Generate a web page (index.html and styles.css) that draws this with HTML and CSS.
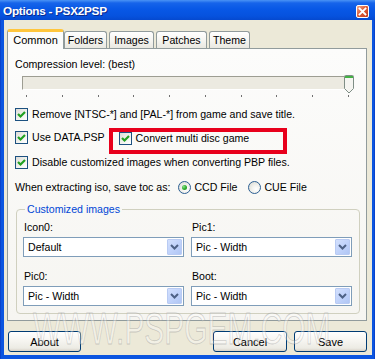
FILE: index.html
```html
<!DOCTYPE html>
<html>
<head>
<meta charset="utf-8">
<title>Options - PSX2PSP</title>
<link rel="stylesheet" href="styles.css">
</head>
<body>
<div class="window">
  <div class="titlebar">
    <span class="title">Options - PSX2PSP</span>
    <span class="close"><svg width="9" height="9" viewBox="0 0 9 9"><path d="M1.5 1.5 L7.5 7.5 M7.5 1.5 L1.5 7.5" stroke="#fff" stroke-width="1.8" stroke-linecap="square"/></svg></span>
  </div>
  <div class="client">
    <div class="tabs">
      <div class="tab active tab-common">Common</div>
      <div class="tab tab-folders">Folders</div>
      <div class="tab tab-images">Images</div>
      <div class="tab tab-patches">Patches</div>
      <div class="tab tab-theme">Theme</div>
    </div>
    <div class="panel">
      <div class="caption">Compression level: (best)</div>
      <div class="slider">
        <div class="track"></div>
        <svg class="thumb" width="10" height="19" viewBox="0 0 10 19"><path d="M0.5 1.5 Q0.5 0.5 1.5 0.5 H8.5 Q9.5 0.5 9.5 1.5 V13.5 L5 18 L0.5 13.5 Z" fill="#F5F5F1" stroke="#7F8E86"/><rect x="1" y="1" width="8" height="2" fill="#45B045"/></svg>
        <div class="ticks"><i></i><i></i><i></i><i></i><i></i><i></i><i></i><i></i><i></i><i></i></div>
      </div>
      <div class="check-row row1"><span class="cb"><svg width="11" height="11" viewBox="0 0 11 11"><polyline points="2,5 4.5,7.5 9,3" fill="none" stroke="#21A121" stroke-width="2.2"/></svg></span><span>Remove [NTSC-*] and [PAL-*] from game and save title.</span></div>
      <div class="pair-row">
        <div class="check-row first"><span class="cb"><svg width="11" height="11" viewBox="0 0 11 11"><polyline points="2,5 4.5,7.5 9,3" fill="none" stroke="#21A121" stroke-width="2.2"/></svg></span><span>Use DATA.PSP</span></div>
        <div class="highlight"><div class="check-row"><span class="cb"><svg width="11" height="11" viewBox="0 0 11 11"><polyline points="2,5 4.5,7.5 9,3" fill="none" stroke="#21A121" stroke-width="2.2"/></svg></span><span>Convert multi disc game</span></div></div>
      </div>
      <div class="check-row row3"><span class="cb"><svg width="11" height="11" viewBox="0 0 11 11"><polyline points="2,5 4.5,7.5 9,3" fill="none" stroke="#21A121" stroke-width="2.2"/></svg></span><span>Disable customized images when converting PBP files.</span></div>
      <div class="radio-row">
        <span>When extracting iso, save toc as:</span>
        <span class="radio-item ccd"><span class="rb on"></span><span>CCD File</span></span>
        <span class="radio-item cue"><span class="rb"></span><span>CUE File</span></span>
      </div>
      <fieldset class="group">
        <legend>Customized images</legend>
        <div class="combos">
          <div class="field"><div class="flabel">Icon0:</div><div class="combo"><span>Default</span><span class="arrow"><svg width="15" height="16" viewBox="0 0 15 16"><polyline points="4,6 7.5,9.5 11,6" fill="none" stroke="#4D6185" stroke-width="2"/></svg></span></div></div>
          <div class="field"><div class="flabel">Pic1:</div><div class="combo"><span>Pic - Width</span><span class="arrow"><svg width="15" height="16" viewBox="0 0 15 16"><polyline points="4,6 7.5,9.5 11,6" fill="none" stroke="#4D6185" stroke-width="2"/></svg></span></div></div>
          <div class="field lower"><div class="flabel">Pic0:</div><div class="combo"><span>Pic - Width</span><span class="arrow"><svg width="15" height="16" viewBox="0 0 15 16"><polyline points="4,6 7.5,9.5 11,6" fill="none" stroke="#4D6185" stroke-width="2"/></svg></span></div></div>
          <div class="field lower"><div class="flabel">Boot:</div><div class="combo"><span>Pic - Width</span><span class="arrow"><svg width="15" height="16" viewBox="0 0 15 16"><polyline points="4,6 7.5,9.5 11,6" fill="none" stroke="#4D6185" stroke-width="2"/></svg></span></div></div>
        </div>
      </fieldset>
    </div>
    <div class="buttons">
      <button class="btn about">About</button>
      <button class="btn cancel">Cancel</button>
      <button class="btn save">Save</button>
    </div>
  </div>
  <div class="watermark" aria-hidden="true">WWW.PSPGEM.COM</div>
</div>
</body>
</html>
```

FILE: styles.css
```css
html, body {
  margin: 0;
  padding: 0;
}
body {
  width: 375px;
  height: 359px;
  overflow: hidden;
  font-family: "Liberation Sans", Arial, sans-serif;
  font-size: 10.6px;
  color: #000;
}
.window {
  position: relative;
  width: 375px;
  height: 359px;
  box-sizing: border-box;
  background: linear-gradient(to right, #0831B8 0, #0B55E0 1px, #0B55E0 374px, #0831B8 375px);
  display: flex;
  flex-direction: column;
}
.titlebar {
  height: 20px;
  flex: none;
  box-sizing: border-box;
  display: flex;
  align-items: center;
  justify-content: space-between;
  padding: 2px 6px 0 3px;
  background: linear-gradient(to bottom, #4A93F5 0, #1664EA 3px, #0858E6 9px, #0652DE 16px, #0549CF 20px);
}
.title {
  color: #fff;
  font-weight: bold;
  font-size: 11.8px;
  letter-spacing: -0.3px;
  text-shadow: 1px 1px 0 #0A2B8E;
}
.close {
  width: 13px;
  height: 13px;
  box-sizing: border-box;
  border: 1px solid #fff;
  border-radius: 2px;
  background: linear-gradient(135deg, #F3A88A 0, #E0603A 45%, #C4391A 100%);
  display: flex;
  align-items: center;
  justify-content: center;
}
.client {
  flex: 1;
  margin: 0 3px 4px 4px;
  background: #ECE9D8;
  padding: 9px 5px 0 3px;
  display: flex;
  flex-direction: column;
}
.tabs {
  display: flex;
  align-items: flex-end;
  height: 19px;
  position: relative;
  z-index: 1;
}
.tab {
  box-sizing: border-box;
  height: 17px;
  margin-right: 1px;
  border: 1px solid #919B9C;
  border-bottom: none;
  border-radius: 3px 3px 0 0;
  background: linear-gradient(to bottom, #FFFFFF 0, #F6F5F1 50%, #E9E8E1 100%);
  text-align: center;
  line-height: 16px;
}
.tab.active {
  height: 20px;
  margin-bottom: -1px;
  margin-right: 0;
  border-top: 3px solid #FFC63D;
  background: #FCFCFB;
  font-size: 11px;
}
.tab-common { width: 57px; }
.tab-folders { width: 43px; }
.tab-images { width: 45px; margin-left: 1px; }
.tab-patches { width: 51px; margin-left: 1px; }
.tab-theme { width: 41px; margin-left: 1px; }
.panel {
  border: 1px solid #919B9C;
  background: linear-gradient(to bottom, #FCFCFB 0, #F6F5F1 100%);
  padding: 9px 6px 6px 7px;
}
.caption {
  line-height: 13px;
}
.slider {
  position: relative;
  margin: 4px 0 0 7px;
  width: 331px;
  padding-top: 1px;
}
.track {
  box-sizing: border-box;
  width: 328px;
  height: 14px;
  border: 1px solid;
  border-color: #9D9D92 #FFFFFF #FFFFFF #9D9D92;
  background: #ECEAE1;
}
.thumb {
  position: absolute;
  left: 322px;
  top: 0;
}
.ticks {
  display: flex;
  justify-content: space-between;
  margin: 5px 0 0 4px;
  width: 323px;
  height: 2px;
}
.ticks i {
  display: block;
  width: 1px;
  height: 2px;
  background: #707070;
}
.check-row {
  display: flex;
  align-items: center;
  gap: 4px;
  height: 13px;
  line-height: 13px;
  white-space: nowrap;
}
.cb {
  width: 13px;
  height: 13px;
  flex: none;
  box-sizing: border-box;
  border: 1px solid #1C5180;
  background: linear-gradient(135deg, #DCDCD7 0, #F4F4F1 60%, #FFFFFF 100%);
  display: flex;
}
.row1 {
  margin-top: 11px;
}
.pair-row {
  display: flex;
  align-items: flex-start;
  gap: 4px;
  margin-top: 7px;
}
.pair-row .first {
  margin-top: 3px;
}
.highlight {
  box-sizing: border-box;
  width: 178px;
  height: 26px;
  border: 4px solid #E8001C;
  padding: 0 0 5px 6px;
  display: flex;
  align-items: center;
}
.row3 {
  margin-top: 2px;
}
.radio-row {
  display: flex;
  align-items: center;
  height: 13px;
  line-height: 13px;
  margin-top: 12px;
  white-space: nowrap;
}
.radio-item {
  display: flex;
  align-items: center;
  gap: 3px;
}
.ccd { margin-left: 8px; }
.cue { margin-left: 11px; }
.rb {
  width: 13px;
  height: 13px;
  box-sizing: border-box;
  border: 1px solid #2C5F93;
  border-radius: 50%;
  background: radial-gradient(circle at 65% 65%, #FFFFFF 0, #F2F2EE 40%, #D6D6CF 100%);
  display: flex;
  align-items: center;
  justify-content: center;
}
.rb.on::after {
  content: "";
  width: 5px;
  height: 5px;
  border-radius: 50%;
  background: radial-gradient(circle at 35% 35%, #8AE08A 0, #2EAE2E 50%, #1C8E1C 100%);
}
.group {
  margin: 9px 0 0 1px;
  padding: 5px 7px 7px 6px;
  border: 1px solid #D0D0BF;
  border-radius: 4px;
  min-width: 0;
}
.group legend {
  padding: 0 2px;
  margin-left: 2px;
  line-height: 13px;
  color: #0046D5;
}
.combos {
  display: grid;
  grid-template-columns: 161px 161px;
  column-gap: 7px;
}
.field.lower {
  margin-top: 13px;
}
.flabel {
  line-height: 13px;
  margin: 0 0 3px 1px;
}
.combo {
  box-sizing: border-box;
  height: 20px;
  border: 1px solid #7F9DB9;
  background: #FFFFFF;
  display: flex;
  align-items: center;
  padding-left: 4px;
}
.combo .arrow {
  margin: 1px 1px 1px auto;
  width: 15px;
  height: 16px;
  box-sizing: border-box;
  border: 1px solid #B9CBF3;
  border-radius: 1px;
  background: linear-gradient(135deg, #D3E0FD 0, #C1D3FB 50%, #B0C6F4 100%);
  display: flex;
}
.combo .arrow svg {
  margin: -1px;
}
.buttons {
  display: flex;
  margin-top: 10px;
  padding-left: 1px;
  gap: 7px;
}
.btn {
  box-sizing: border-box;
  height: 21px;
  width: 73px;
  padding: 0;
  border: 1px solid #003C74;
  border-radius: 3px;
  background: linear-gradient(to bottom, #FFFFFF 0, #F5F4EF 50%, #ECEBE4 85%, #D8D2C6 100%);
  font-family: "Liberation Sans", Arial, sans-serif;
  font-size: 11px;
  color: #000;
}
.btn.cancel {
  margin-left: auto;
  width: 74px;
}
.watermark {
  position: absolute;
  left: 33px;
  top: 307px;
  font-family: "Liberation Sans", Arial, sans-serif;
  font-size: 44px;
  line-height: 44px;
  transform: scaleX(0.68);
  transform-origin: left top;
  color: rgba(255, 255, 255, 0.35);
  -webkit-text-stroke: 0.8px rgba(140, 140, 140, 0.4);
  white-space: nowrap;
  pointer-events: none;
}
```
